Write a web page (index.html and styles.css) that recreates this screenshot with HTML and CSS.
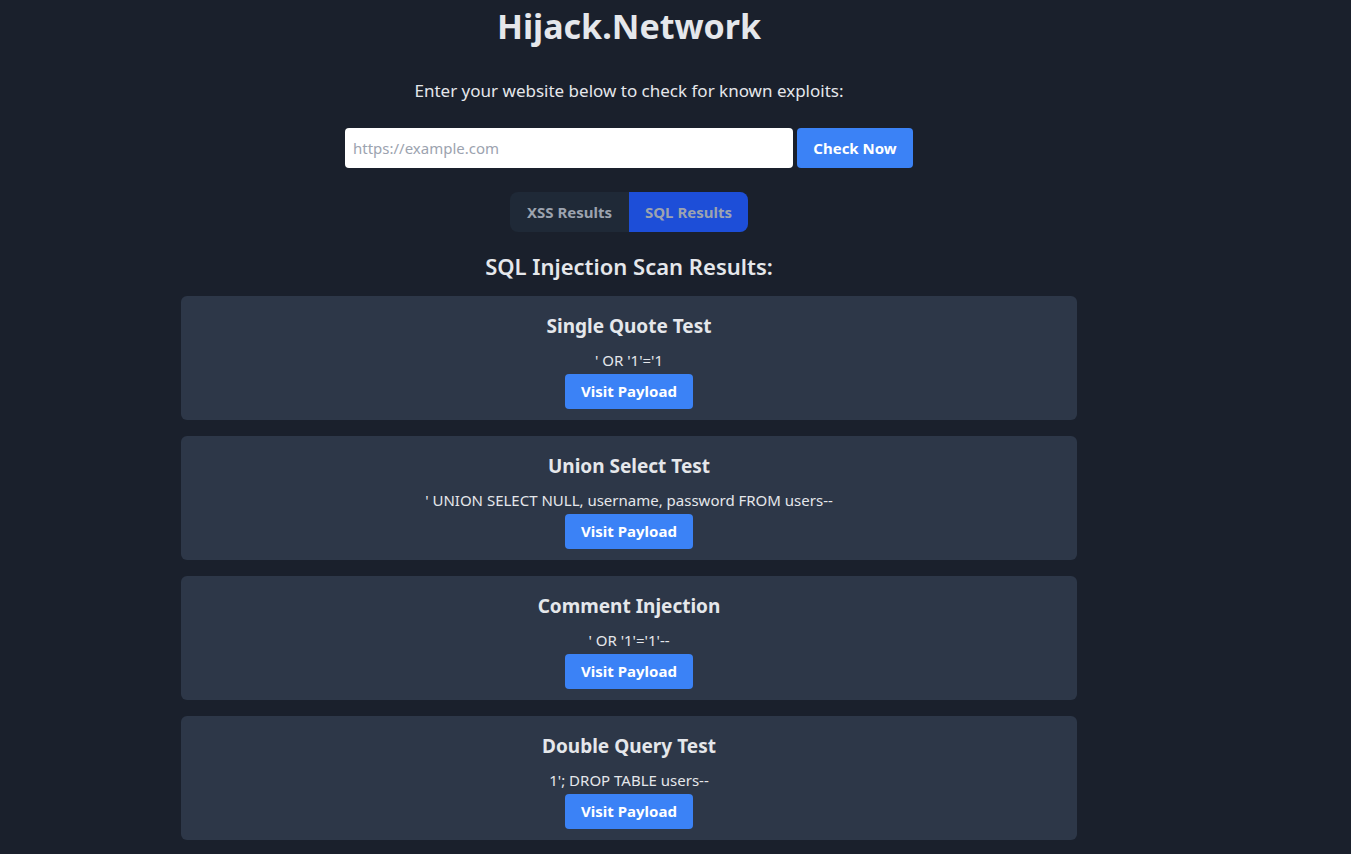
FILE: index.html
```html
<!DOCTYPE html>
<html lang="en">
<head>
<meta charset="utf-8">
<title>Hijack.Network</title>
<link rel="stylesheet" href="styles.css">
</head>
<body>
<div class="page">
  <main class="container">
    <h1 class="title">Hijack.Network</h1>
    <p class="subtitle">Enter your website below to check for known exploits:</p>
    <form class="check-form">
      <input class="url-input" type="text" placeholder="https://example.com">
      <button class="btn btn-check" type="button">Check Now</button>
    </form>
    <div class="tabs">
      <button class="tab" type="button">XSS Results</button>
      <button class="tab tab-active" type="button">SQL Results</button>
    </div>
    <h2 class="section-title">SQL Injection Scan Results:</h2>
    <div class="results">
      <div class="card">
        <h3 class="card-title">Single Quote Test</h3>
        <p class="payload">' OR '1'='1</p>
        <a class="btn btn-visit" href="#">Visit Payload</a>
      </div>
      <div class="card">
        <h3 class="card-title">Union Select Test</h3>
        <p class="payload">' UNION SELECT NULL, username, password FROM users--</p>
        <a class="btn btn-visit" href="#">Visit Payload</a>
      </div>
      <div class="card">
        <h3 class="card-title">Comment Injection</h3>
        <p class="payload">' OR '1'='1'--</p>
        <a class="btn btn-visit" href="#">Visit Payload</a>
      </div>
      <div class="card">
        <h3 class="card-title">Double Query Test</h3>
        <p class="payload">1'; DROP TABLE users--</p>
        <a class="btn btn-visit" href="#">Visit Payload</a>
      </div>
    </div>
  </main>
</div>
</body>
</html>
```

FILE: styles.css
```css
* { box-sizing: border-box; }
html, body {
  margin: 0;
  padding: 0;
  background: #1a202c;
  color: #e2e8f0;
  font-family: "Noto Sans", "Open Sans", sans-serif;
  height: 100%;
  overflow: hidden;
}
.page {
  width: 1258px;
  padding-top: 8px;
}
.container {
  width: 896px;
  margin: 0 auto;
  display: flex;
  flex-direction: column;
  align-items: center;
}
.title {
  margin: 0;
  font-size: 34px;
  line-height: 36px;
  font-weight: 700;
  color: #e5e7eb;
}
.subtitle {
  margin: 33px 0 0;
  font-size: 17px;
  line-height: 28px;
  color: #e5e7eb;
}
.check-form {
  margin-top: 23px;
  display: flex;
  gap: 4px;
}
.url-input {
  width: 448px;
  height: 40px;
  border: none;
  border-radius: 4px;
  background: #ffffff;
  padding: 0 8px;
  font-family: inherit;
  font-size: 15px;
  color: #111827;
  outline: none;
}
.url-input::placeholder { color: #9ca3af; }
.btn {
  border: none;
  border-radius: 4px;
  background: #3b82f6;
  color: #ffffff;
  font-family: inherit;
  font-weight: 700;
  font-size: 15px;
  text-decoration: none;
  cursor: pointer;
}
.btn-check {
  width: 116px;
  height: 40px;
}
.tabs {
  margin-top: 24px;
  display: flex;
  border-radius: 8px;
  overflow: hidden;
  background: #1f2937;
}
.tab {
  width: 119px;
  height: 40px;
  border: none;
  background: transparent;
  color: #9ca3af;
  font-family: inherit;
  font-size: 15px;
  font-weight: 700;
}
.tab-active { background: #1d4ed8; }
.section-title {
  margin: 16px 0 0;
  font-size: 22px;
  line-height: 36px;
  font-weight: 600;
  color: #e5e7eb;
}
.results {
  margin-top: 12px;
  width: 100%;
  display: flex;
  flex-direction: column;
  gap: 16px;
}
.card {
  background: #2d3748;
  border-radius: 6px;
  padding: 16px 16px 11px;
  display: flex;
  flex-direction: column;
  align-items: center;
}
.card-title {
  margin: 0 0 8px;
  font-size: 19px;
  line-height: 28px;
  font-weight: 700;
  color: #e5e7eb;
}
.payload {
  margin: 0;
  font-size: 15px;
  line-height: 24px;
  color: #e5e7eb;
}
.btn-visit {
  margin-top: 2px;
  display: inline-block;
  width: 128px;
  height: 35px;
  line-height: 35px;
  text-align: center;
}
```
